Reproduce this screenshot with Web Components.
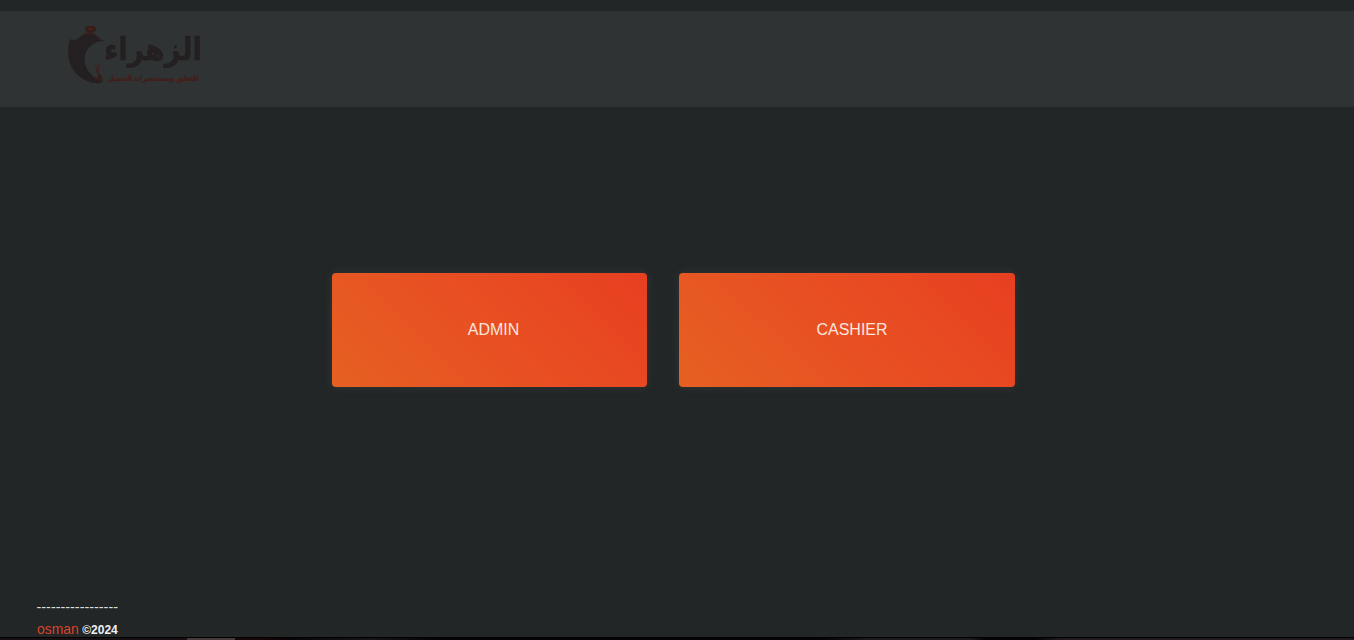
<!DOCTYPE html>
<html lang="en">
<head>
<meta charset="utf-8">
<title>Al Zahraa</title>
<style>
html,body{margin:0;height:100%;overflow:hidden;background:#222627}
body{font-family:"Liberation Sans",Arial,sans-serif}
</style>
</head>
<body>
<portal-page>
  <portal-header slot="header"><brand-logo></brand-logo></portal-header>
  <role-button style="width:315px">ADMIN</role-button>
  <role-button style="width:336px;padding-left:10px">CASHIER</role-button>
  <portal-footer slot="footer">osman</portal-footer>
</portal-page>
<script>
class Base extends HTMLElement{
  constructor(){
    super();
    this.attachShadow({mode:"open"}).innerHTML=this.constructor.view;
  }
}
class PortalPage extends Base{
  static view=`<style>
    :host{display:flex;flex-direction:column;height:640px;box-sizing:border-box;padding-top:11px;background:#222627}
    main{display:flex;gap:32px;padding:166px 0 0 332px;flex:1}
  </style><slot name="header"></slot><main><slot></slot></main><slot name="footer"></slot>`;
}
class PortalHeader extends Base{
  static view=`<style>
    :host{display:block;height:96px;box-sizing:border-box;padding:0 0 0 61px;background:#2f3333}
  </style><slot></slot>`;
}
class BrandLogo extends Base{
  static view=`<style>:host{display:block;width:170px;height:96px}svg{display:block;overflow:visible;filter:blur(.3px)}
    text{font-family:"DejaVu Sans","Noto Sans",sans-serif;font-weight:bold}</style>
  <svg width="170" height="96" viewBox="60 11 170 96">
    <path d="M69 39Q74 42 80 36Q85 33 90 33Q96 34 98 39L104 41Q91 41 86 50Q81 60 86 69Q91 78 102 82Q95 85 86 81Q72 75 68 60Q66 48 69 39Z" fill="#241f20"/>
    <path d="M84 29Q84 26 87 26H92Q95 26 95 29Q95 32 89.500 33Q84 32 84 29Z" fill="#331d1a"/>
    <path d="M87 29H92" stroke="#5a251b" stroke-width="1.200"/>
    <path d="M81 36Q84 32 88 33Q94 35 99 38" fill="none" stroke="#3d201c" stroke-width="1.200"/>
    <path d="M98 64Q95 69 98 73Q103 77 101 82Q94 81 89 76Q98 79 97 75Q93 69 98 64Z" fill="#33201d"/>
    <path d="M98.500 64Q96 69 98 72" fill="none" stroke="#4b221b" stroke-width="1.300"/>
    <text x="201" y="60" direction="rtl" font-size="31" textLength="98" lengthAdjust="spacingAndGlyphs" fill="#241f20" stroke="#241f20" stroke-width=".4">الزهراء</text>
    <text x="197" y="81" direction="rtl" font-size="8.500" textLength="90" lengthAdjust="spacingAndGlyphs" fill="#451e19" stroke="#451e19" stroke-width=".2">للعطور ومستحضرات التجميل</text>
  </svg>`;
}
class RoleButton extends Base{
  static view=`<style>
    :host{display:flex;align-items:center;justify-content:center;height:114px;box-sizing:border-box;padding:0 0 0 8px;border-radius:4px;
      background:linear-gradient(45deg,#e66022,#e84e22 54%,#e73f21);box-shadow:0 0 8px rgba(75,83,84,.38);
      color:#fbe6df;font-size:16px;line-height:20px}
  </style><span><slot></slot></span>`;
}
class PortalFooter extends Base{
  static view=`<style>
    :host{display:block;color:#dd4229;font-size:13.900px}
    .rule{padding-left:36.500px;font-size:14.400px;line-height:18px;color:#dcdede;height:22px}
    .credit{display:flex;align-items:baseline;gap:3.500px;padding-left:37px;height:17px;line-height:19px}
    b{font-size:12px;color:#f0f0f0}
    .edge{height:3px;background:linear-gradient(#000 0 1px,transparent 1px),linear-gradient(90deg,#171113 0 187px,#443b3b 187px 235px,#190609 235px 255px,#090507 290px,#171517 370px,#030204 440px 820px,#1d1b1d 870px 970px,#030204 985px 1035px,#211b20 1060px)}
  </style><div class="rule">-----------------</div><div class="credit"><slot></slot><b>©2024</b></div><div class="edge"></div>`;
}
customElements.define("portal-page",PortalPage);
customElements.define("portal-header",PortalHeader);
customElements.define("brand-logo",BrandLogo);
customElements.define("role-button",RoleButton);
customElements.define("portal-footer",PortalFooter);
</script>
</body>
</html>
